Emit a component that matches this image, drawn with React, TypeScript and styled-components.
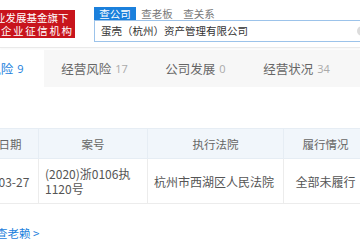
import React from "react";
import styled, { createGlobalStyle } from "styled-components";

const GlobalStyle = createGlobalStyle`
  body {
    margin: 0;
    background: #fff;
    overflow: hidden;
    font-family: "Noto Sans CJK SC", "Noto Sans", sans-serif;
  }
`;

const searchTabs = ["查公司", "查老板", "查关系"];

const navTabs = [
  { label: "司法风险", count: 9 },
  { label: "经营风险", count: 17 },
  { label: "公司发展", count: 0 },
  { label: "经营状况", count: 34 },
];

const columns = ["立案日期", "案号", "执行法院", "履行情况"];

function App() {
  return (
    <Page>
      <GlobalStyle />
      <Header>
        <Banner>
          <BannerLine $cut>业发展基金旗下</BannerLine>
          <BannerLine $spaced>企业征信机构</BannerLine>
        </Banner>
        <Search>
          <SearchTabs>
            {searchTabs.map((t, i) => (
              <SearchTab key={t} $active={i === 0}>
                {t}
              </SearchTab>
            ))}
          </SearchTabs>
          <SearchInput>
            蛋壳（杭州）资产管理有限公司
            <ClearDot />
          </SearchInput>
        </Search>
      </Header>

      <TabBar>
        {navTabs.map((t, i) => (
          <NavTab key={t.label} $active={i === 0}>
            {t.label}
            <Count $active={i === 0}>{t.count}</Count>
          </NavTab>
        ))}
      </TabBar>

      <Table>
        {columns.map((c) => (
          <HeadCell key={c}>{c}</HeadCell>
        ))}
        <Cell $align="center">2020-03-27</Cell>
        <Cell>(2020)浙0106执1120号</Cell>
        <Cell>杭州市西湖区人民法院</Cell>
        <Cell $align="center">全部未履行</Cell>
      </Table>

      <MoreLink>查老赖 &gt;</MoreLink>
    </Page>
  );
}

export default App;

const Page = styled.div`
  width: 360px;
  height: 240px;
  overflow: hidden;
  position: relative;
`;

const Header = styled.div`
  display: flex;
  align-items: flex-start;
  height: 48px;
  padding-top: 7px;
  box-sizing: border-box;
  border-bottom: 1px solid #eaeaea;
  box-shadow: 0 1px 2px rgba(0, 0, 0, 0.04);
`;

const Banner = styled.div`
  margin-top: 3px;
  width: 75px;
  height: 28px;
  background: #c8141c;
  color: #fff;
  overflow: hidden;
  display: flex;
  flex-direction: column;
  justify-content: center;
  flex-shrink: 0;
`;

const BannerLine = styled.div<{ $cut?: boolean; $spaced?: boolean }>`
  font-size: 10.5px;
  line-height: 13px;
  height: 13px;
  overflow: hidden;
  white-space: nowrap;
  text-indent: ${(p) => (p.$cut ? "-5px" : "1px")};
  letter-spacing: ${(p) => (p.$spaced ? "1.6px" : "0")};
`;

const Search = styled.div`
  margin-left: 19px;
  display: flex;
  flex-direction: column;
  width: 290px;
  flex-shrink: 0;
`;

const SearchTabs = styled.div`
  display: flex;
`;

const SearchTab = styled.div<{ $active?: boolean }>`
  width: 42px;
  height: 13px;
  font-size: 10.5px;
  line-height: 13px;
  text-align: center;
  color: ${(p) => (p.$active ? "#fff" : "#777")};
  background: ${(p) => (p.$active ? "#1b80dc" : "transparent")};
`;

const SearchInput = styled.div`
  position: relative;
  height: 22px;
  box-sizing: border-box;
  border: 1px solid #9cc3ea;
  padding-left: 6px;
  font-size: 10.5px;
  line-height: 20px;
  color: #333;
  white-space: nowrap;
`;

const ClearDot = styled.span`
  position: absolute;
  left: 262px;
  top: 5px;
  width: 10px;
  height: 10px;
  border-radius: 50%;
  background: #dcdcdc;
`;

const TabBar = styled.div`
  display: flex;
  margin-top: 2px;
  margin-left: -57px;
  height: 37px;
  background: #f7f7f7;
`;

const NavTab = styled.div<{ $active?: boolean }>`
  width: 101px;
  flex-shrink: 0;
  display: flex;
  align-items: center;
  justify-content: center;
  font-size: 12.5px;
  color: ${(p) => (p.$active ? "#1b80dc" : "#666")};
  background: ${(p) => (p.$active ? "#fff" : "transparent")};
`;

const Count = styled.span<{ $active?: boolean }>`
  margin-left: 4px;
  font-family: "Open Sans", "Noto Sans", sans-serif;
  font-size: 11px;
  color: ${(p) => (p.$active ? "#1b80dc" : "#aaa")};
`;

const Table = styled.div`
  display: grid;
  grid-template-columns: 80px 109px 136px 84px;
  margin-top: 41px;
  margin-left: -42px;
  border-top: 1px solid #e6edf4;
  border-left: 1px solid #e6edf4;
  width: max-content;
`;

const HeadCell = styled.div`
  height: 30px;
  box-sizing: border-box;
  background: #f1f6fb;
  border-right: 1px solid #e6edf4;
  border-bottom: 1px solid #e6edf4;
  display: flex;
  align-items: center;
  justify-content: center;
  font-size: 11.5px;
  color: #666;
`;

const Cell = styled.div<{ $align?: string }>`
  height: 45px;
  box-sizing: border-box;
  padding: 0 6px;
  border-right: 1px solid #ececec;
  border-bottom: 1px solid #ececec;
  display: flex;
  align-items: center;
  justify-content: ${(p) => (p.$align === "center" ? "center" : "flex-start")};
  text-align: ${(p) => p.$align || "left"};
  font-size: 12px;
  line-height: 15px;
  color: #555;
  word-break: normal;
  line-break: strict;
`;

const MoreLink = styled.div`
  margin-top: 22px;
  margin-left: -4px;
  font-size: 11.5px;
  line-height: 14px;
  color: #1b80dc;
`;
